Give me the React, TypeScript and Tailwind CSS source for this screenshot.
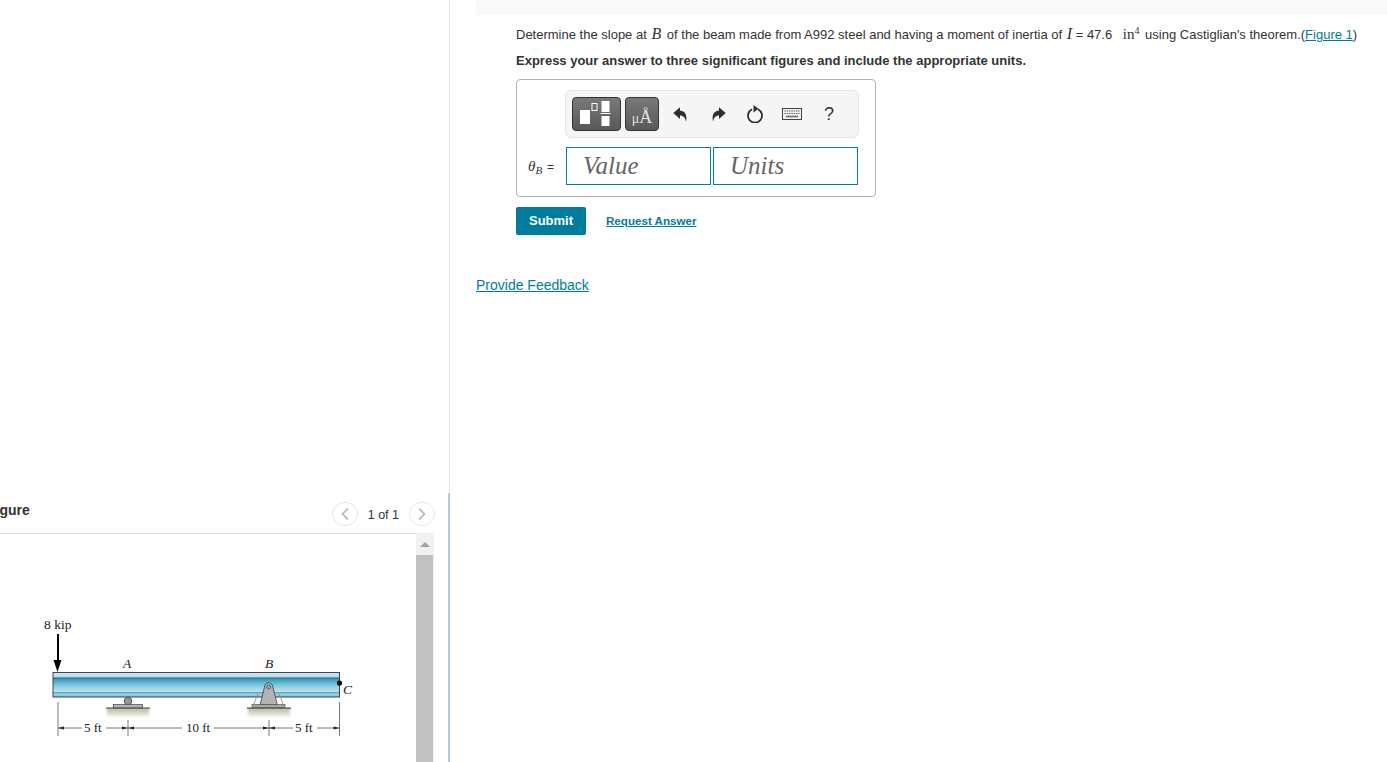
import React from 'react';

const BeamFigure = () => (
  <svg width="416" height="228" viewBox="0 534 416 228" className="block">
    <defs>
      <linearGradient id="beam" x1="0" y1="0" x2="0" y2="1">
        <stop offset="0" stopColor="#d3e9f1" />
        <stop offset="0.19" stopColor="#b5d9e8" />
        <stop offset="0.22" stopColor="#2c5c74" />
        <stop offset="0.27" stopColor="#2f9cbf" />
        <stop offset="0.55" stopColor="#8accE0" />
        <stop offset="0.78" stopColor="#c0e1ec" />
        <stop offset="0.82" stopColor="#4fa3c4" />
        <stop offset="0.88" stopColor="#a6d4e5" />
        <stop offset="1" stopColor="#78bdd8" />
      </linearGradient>
      <linearGradient id="ground" x1="0" y1="0" x2="0" y2="1">
        <stop offset="0" stopColor="#b5b49c" />
        <stop offset="1" stopColor="#ffffff" />
      </linearGradient>
      <filter id="soft" x="-10%" y="-30%" width="120%" height="160%">
        <feGaussianBlur stdDeviation="1" />
      </filter>
    </defs>

    <text x="44" y="629" fontFamily="Liberation Serif" fontSize="13.500" fill="#222">8 kip</text>
    <rect x="57" y="634" width="2" height="28" fill="#000" />
    <path d="M53.500 660h8l-4 12z" fill="#000" />

    <text x="123" y="668" fontFamily="Liberation Serif" fontStyle="italic" fontSize="13.500" fill="#222">A</text>
    <text x="265" y="668" fontFamily="Liberation Serif" fontStyle="italic" fontSize="13.500" fill="#222">B</text>
    <text x="343" y="694" fontFamily="Liberation Serif" fontStyle="italic" fontSize="13.500" fill="#222">C</text>

    <rect x="53" y="672.500" width="286.500" height="24.500" fill="url(#beam)" stroke="#2f4a58" strokeWidth="1" />
    <circle cx="339.500" cy="683" r="2.600" fill="#000" />

    {/* roller at A */}
    <rect x="107" y="708" width="42" height="10" fill="url(#ground)" filter="url(#soft)" />
    <circle cx="128" cy="701" r="3.800" fill="#8f9a9e" stroke="#444" strokeWidth="0.8" />
    <rect x="113.500" y="704.500" width="29" height="3.500" fill="#b6b6b0" stroke="#444" strokeWidth="0.7" />
    <rect x="106" y="707.500" width="44" height="1.200" fill="#555" />

    {/* pin at B */}
    <rect x="248" y="708" width="42" height="10" fill="url(#ground)" filter="url(#soft)" />
    <path d="M258 693.500l-2 5-2 5.500M279 693.500l2 5 2 5.500" fill="none" stroke="#8a8a80" strokeWidth="0.8" />
    <path d="M260 705l4.500-18a4.200 4.200 0 0 1 8.400 0l4.500 18z" fill="#b3b3b6" stroke="#3c3c3c" strokeWidth="0.8" />
    <circle cx="268.700" cy="687" r="2" fill="#6fb6d3" stroke="#444" strokeWidth="0.7" />
    <rect x="252" y="704.500" width="33" height="3" fill="#a8a8a4" stroke="#444" strokeWidth="0.6" />
    <rect x="247" y="707.500" width="44" height="1.300" fill="#555" />

    {/* dimension lines */}
    <g stroke="#555" strokeWidth="0.8" fill="none">
      <path d="M58 702v34M128 720v16M269 720v16M339.500 702v34" />
      <path d="M58 728h24M106 728h22M128 728h54M214 728h55M269 728h24M317 728h22" />
    </g>
    <g fill="#222">
      <path d="M58 728l6-1.500v3zM128 728l-6-1.500v3zM128 728l6-1.500v3zM269 728l-6-1.500v3zM269 728l6-1.500v3zM339.500 728l-6-1.500v3z" />
    </g>
    <g fontFamily="Liberation Serif" fontSize="13" fill="#222">
      <text x="84" y="732">5 ft</text>
      <text x="186" y="732">10 ft</text>
      <text x="295" y="732">5 ft</text>
    </g>
  </svg>
);

const PagerButton = ({ dir }: { dir: 'prev' | 'next' }) => (
  <button className="w-[26px] h-[24px] rounded-full border border-[#e6e6e6] bg-white flex items-center justify-center">
    <svg width="10" height="14" viewBox="0 0 10 14" fill="none" stroke="#bdbdbd" strokeWidth="1.800">
      <path d={dir === 'prev' ? 'M8 1.500L2.500 7 8 12.500' : 'M2 1.500L7.500 7 2 12.500'} />
    </svg>
  </button>
);

const TemplatesIcon = () => (
  <svg width="34" height="28" viewBox="0 0 34 28">
    <rect x="0" y="10" width="10" height="14" fill="#fff" />
    <rect x="12" y="3.500" width="5" height="7" fill="none" stroke="#fff" strokeWidth="1" />
    <rect x="21.500" y="1" width="8" height="11" fill="#fff" />
    <rect x="20.500" y="13" width="10" height="1" fill="#fff" />
    <rect x="21.500" y="16" width="8" height="10" fill="#fff" />
  </svg>
);

const UndoIcon = ({ flip }: { flip?: boolean }) => (
  <svg width="14" height="15" viewBox="0 0 14 15" className={flip ? '-scale-x-100' : ''}>
    <path d="M0.300 6L7 0.300V3.800C11.500 3.800 14.500 7 13 14.800C12.500 11 10.500 8.500 7 8.500V12z" fill="#2f2f2f" />
  </svg>
);

const ResetIcon = () => (
  <svg width="16" height="18" viewBox="0 0 16 18" fill="none">
    <path d="M5 4.300A7 7 0 1 0 11 4.300" stroke="#2f2f2f" strokeWidth="1.800" />
    <path d="M6.500 0L11.500 3.800 6.500 7.500z" fill="#2f2f2f" />
  </svg>
);

const KeyboardIcon = () => (
  <svg width="20" height="12" viewBox="0 0 20 12">
    <rect x="0.500" y="0.500" width="19" height="11" fill="#efefef" stroke="#444" />
    <path d="M2.500 3h15M2.500 5.500h15" stroke="#666" strokeWidth="1.200" strokeDasharray="1.500 0.800" />
    <path d="M4 8.500h12" stroke="#666" strokeWidth="1.500" />
  </svg>
);

const App = () => {
  return (
    <div className="w-[1387px] h-[762px] overflow-hidden bg-white flex font-['Liberation_Sans',sans-serif] text-[#333]">
      {/* figure pane */}
      <div className="w-[448px] h-full shrink-0 flex flex-col justify-end">
        <div className="h-[40px] flex items-center justify-between pr-[13px]">
          <h2 className="-ml-[13px] mb-[6px] text-[14px] font-bold text-[#333]">Figure</h2>
          <div className="flex items-center gap-[10px] mt-[2px]">
            <PagerButton dir="prev" />
            <span className="text-[12.500px] leading-[16px] mt-[1px]">1 of 1</span>
            <PagerButton dir="next" />
          </div>
        </div>
        <div className="h-[229px] flex overflow-hidden">
          <div className="w-[416px] border-t border-[#dddddd]">
            <BeamFigure />
          </div>
          <div className="w-[18px] h-full bg-[#f1f1f1] flex flex-col">
            <div className="h-[22px] flex items-center justify-center pr-[1px]">
              <div className="w-0 h-0 border-x-[5px] border-x-transparent border-b-[5px] border-b-[#a3a3a3]" />
            </div>
            <div className="flex-1 w-[17px] bg-[#c1c1c1]" />
          </div>
        </div>
      </div>

      {/* divider */}
      <div className="w-[2px] h-full shrink-0 flex flex-col items-end">
        <div className="h-[493px] w-[1px] bg-[#e3e3e3]" />
        <div className="flex-1 w-[2px] bg-[#b4c9e2]" />
      </div>

      {/* problem pane */}
      <div className="flex-1 pl-[26px]">
        <div className="h-[15px] bg-[#f9f9f9]" />
        <div className="pl-[40px] pt-[11px]">
          <p className="text-[13px] leading-[16px] whitespace-nowrap">
            Determine the slope at{' '}
            <span className="ml-[1px] mr-[2px] font-['Liberation_Serif',serif] italic text-[16px]">B</span> of the beam made from A992 steel and
            having a moment of inertia of{' '}
            <span className="ml-[1px] font-['Liberation_Serif',serif] italic text-[16px]">I</span> = 47.6{' '}
            <span className="ml-[7px] mr-[2px] font-['Liberation_Serif',serif] text-[15px]">
              in<sup className="text-[10px]">4</sup>
            </span>{' '}
            using Castiglian's theorem.(<a className="text-[#007c9e] underline">Figure 1</a>)
          </p>
          <p className="mt-[10px] text-[13px] leading-[16px] font-bold">
            Express your answer to three significant figures and include the appropriate units.
          </p>

          <div className="mt-[10px] w-[360px] h-[118px] border border-[#b3b3b3] rounded-[4px] pl-[9px] pt-[10px]">
            <div className="ml-[39px] w-[294px] h-[48px] bg-[#f5f5f5] border border-[#e6e6e6] rounded-[6px] flex items-center pl-[6px]">
              <button className="w-[49px] h-[34px] rounded-[4px] border border-[#333] bg-linear-to-b from-[#79797c] to-[#59595b] flex items-center justify-center">
                <TemplatesIcon />
              </button>
              <button className="ml-[4px] w-[34px] h-[34px] rounded-[4px] border border-[#333] bg-linear-to-b from-[#79797c] to-[#59595b] text-[#e0e0e0] font-['Liberation_Serif',serif] flex items-end justify-center pb-[4px] leading-none">
                <span className="text-[14px]">μ</span>
                <span className="text-[18px]">Å</span>
              </button>
              <div className="ml-[14px] w-[14px] flex justify-center"><UndoIcon /></div>
              <div className="ml-[25px] w-[14px] flex justify-center"><UndoIcon flip /></div>
              <div className="ml-[21px] w-[16px] flex justify-center"><ResetIcon /></div>
              <div className="ml-[19px] w-[20px] flex justify-center"><KeyboardIcon /></div>
              <div className="ml-[22px] text-[18px] leading-none text-[#333]">?</div>
            </div>
            <div className="mt-[9px] flex items-center">
              <div className="w-[40px] pl-[2px] text-[12px] whitespace-nowrap flex items-baseline gap-[5px]">
                <span className="font-['Liberation_Serif',serif] italic text-[15px]">
                  θ<sub className="text-[11px]">B</sub>
                </span>
                <span>=</span>
              </div>
              <div className="w-[145px] h-[38px] border border-[#007c9e] pl-[16px] flex items-center font-['Liberation_Serif',serif] italic text-[25px] text-[#666]">
                Value
              </div>
              <div className="ml-[2px] w-[145px] h-[38px] border border-[#007c9e] pl-[16px] flex items-center font-['Liberation_Serif',serif] italic text-[25px] text-[#666]">
                Units
              </div>
            </div>
          </div>

          <div className="mt-[10px] flex items-center">
            <button className="w-[70px] h-[28px] bg-[#007c9e] rounded-[2px] text-white text-[13px] font-bold">Submit</button>
            <a className="ml-[20px] text-[11.600px] font-bold text-[#007c9e] underline">Request Answer</a>
          </div>
        </div>
        <a className="block mt-[41px] text-[14px] leading-[18px] text-[#007c9e] underline">Provide Feedback</a>
      </div>
    </div>
  );
};

export default App;
